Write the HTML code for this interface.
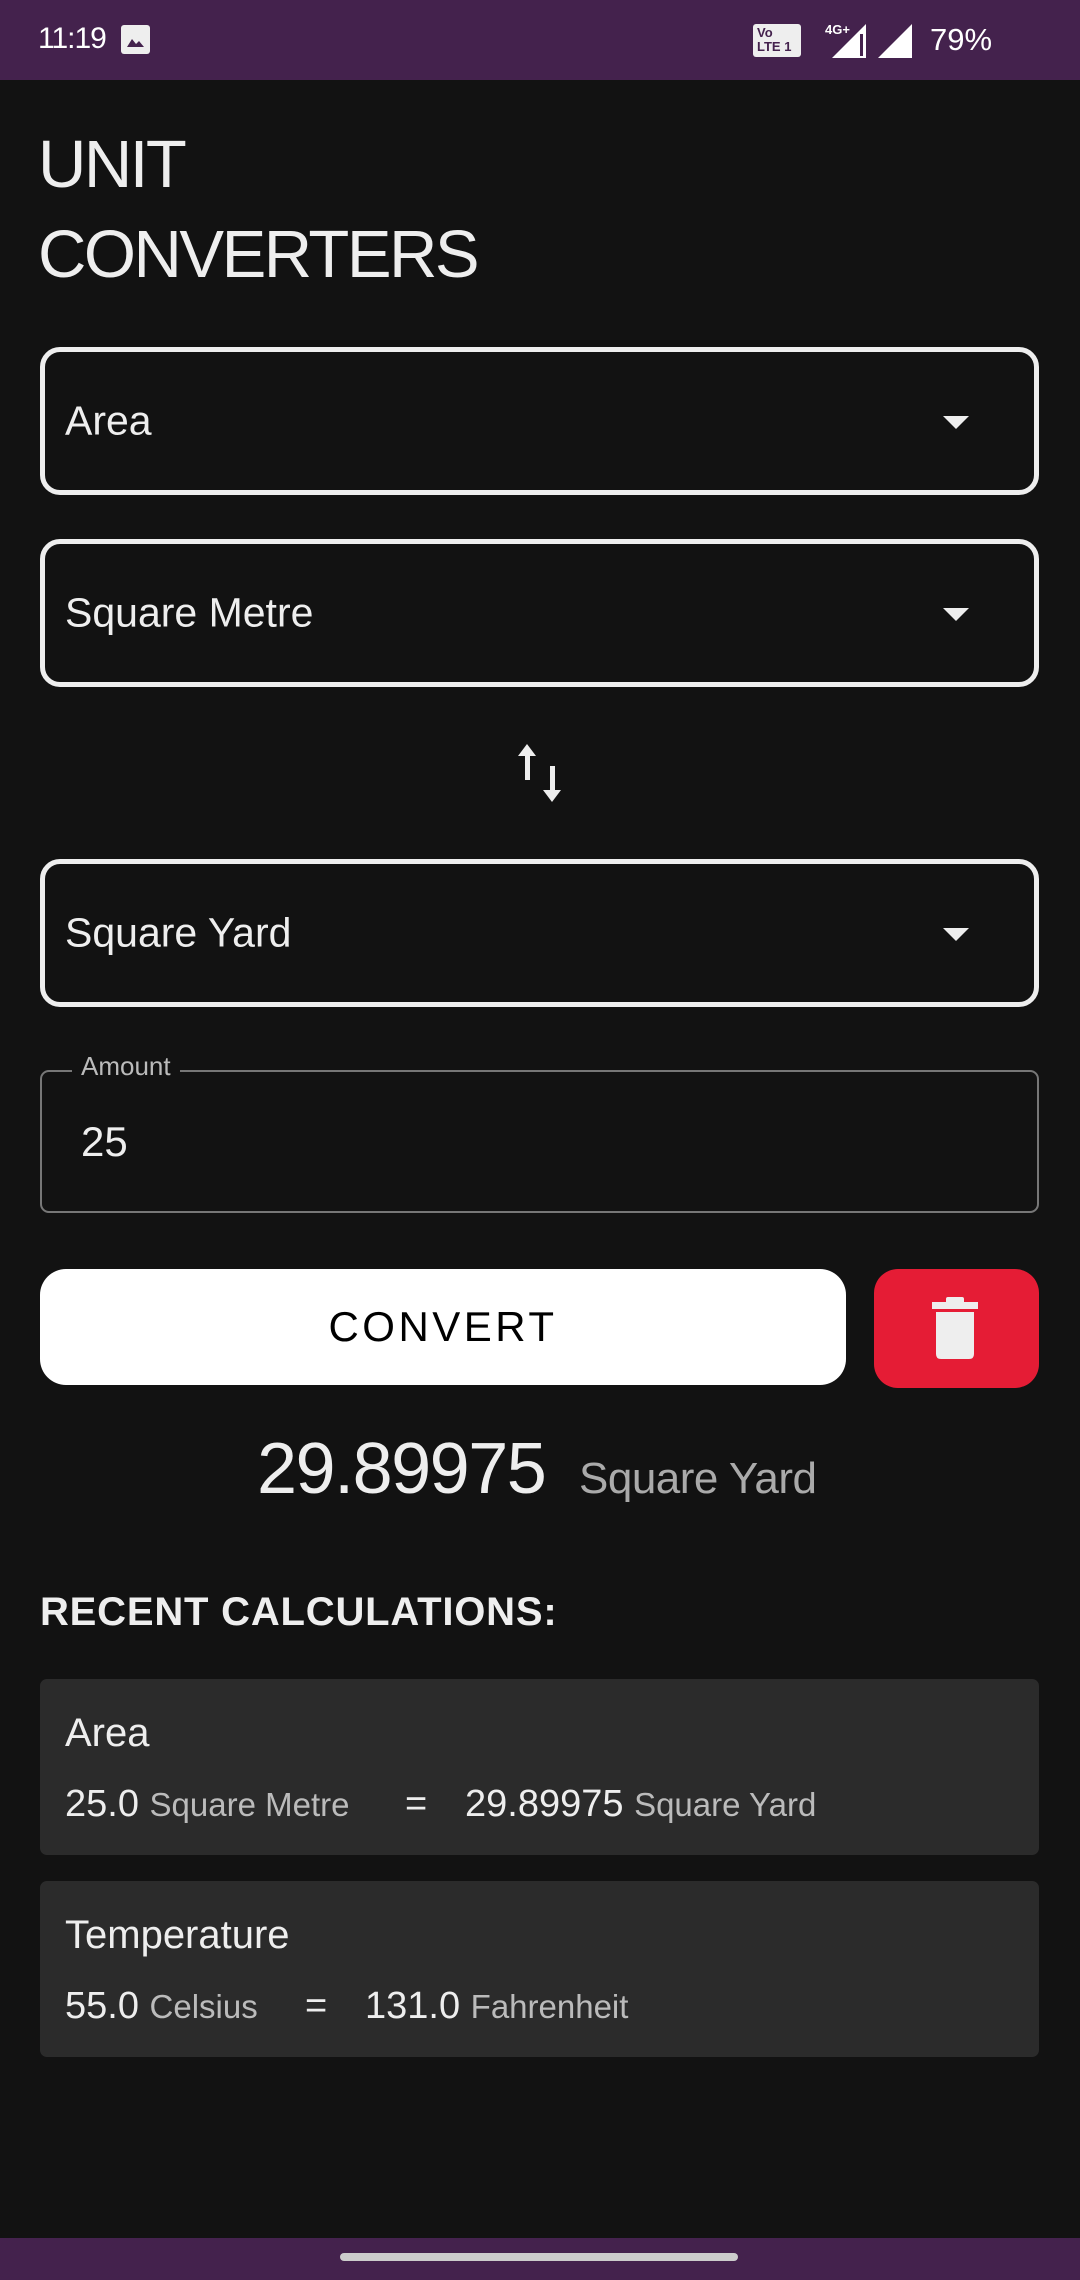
<!DOCTYPE html>
<html><head><meta charset="utf-8"><style>
*{margin:0;padding:0;box-sizing:border-box}
body{width:1080px;height:2280px;background:#121212;font-family:"Liberation Sans",sans-serif;color:#eee;position:relative;overflow:hidden}
.abs{position:absolute}
.sb{top:0;left:0;width:1080px;height:80px;background:#44224d}
.nb{bottom:0;left:0;width:1080px;height:42px;background:#44224d}
.dd{left:40px;width:999px;height:148px;border:5px solid #eee;border-radius:20px}
.dd span{position:absolute;left:20px;top:50%;transform:translateY(-50%);font-size:41px;color:#eee}
.dd i{position:absolute;left:898px;top:50%;margin-top:-5px;width:0;height:0;border-left:13px solid transparent;border-right:13px solid transparent;border-top:13px solid #eee}
.card{left:40px;width:999px;height:176px;background:#2b2b2b;border-radius:7px}
.card .t{position:absolute;left:25px;top:32px;font-size:40px;color:#eee}
.card .l{position:absolute;top:104px;font-size:38px;color:#eee;white-space:nowrap}
.card .l small{font-size:33px;color:#bbb}
</style></head><body>
<div class="abs sb"></div>
<div class="abs" style="left:38px;top:22px;font-size:30px;color:#fff;letter-spacing:-1px">11:19</div>
<div class="abs" style="left:121px;top:25px;width:29px;height:29px;background:#eee;border-radius:3px"><svg width="29" height="29"><path d="M6 22 L11 14 L15 19 L18 16 L23 22Z" fill="#44224d"/></svg></div>
<div class="abs" style="left:753px;top:24px;width:48px;height:33px;background:#eee;border-radius:3px;color:#44224d;font-size:13px;font-weight:bold;line-height:14px;padding:2px 4px">Vo<br>LTE 1</div>
<div class="abs" style="left:825px;top:22px;font-size:13px;font-weight:bold;color:#fff">4G+</div>
<svg class="abs" style="left:830px;top:22px" width="40" height="37"><path d="M36 2 V36 H2Z" fill="#fff"/><rect x="30" y="12" width="3" height="22" fill="#44224d"/></svg>
<svg class="abs" style="left:876px;top:22px" width="40" height="37"><path d="M36 2 V36 H2Z" fill="#fff"/></svg>
<div class="abs" style="left:930px;top:22px;font-size:31px;color:#fff">79%</div>

<div class="abs" style="left:38px;top:120px;font-size:67px;line-height:90px;letter-spacing:-2.5px;color:#eee">UNIT<br>CONVERTERS</div>

<div class="abs dd" style="top:347px"><span>Area</span><i></i></div>
<div class="abs dd" style="top:539px"><span>Square Metre</span><i></i></div>
<svg class="abs" style="left:516px;top:742px" width="50" height="62" viewBox="0 0 50 62"><path d="M11 2 L20 14 H14 V38 H9 V14 H2Z M36 60 L45 48 H39 V24 H34 V48 H27Z" fill="#eee"/></svg>
<div class="abs dd" style="top:859px"><span>Square Yard</span><i></i></div>

<div class="abs" style="left:40px;top:1070px;width:999px;height:143px;border:2.5px solid #777;border-radius:9px"></div>
<div class="abs" style="left:72px;top:1051px;padding:0 9px;background:#121212;font-size:26px;color:#bbb">Amount</div>
<div class="abs" style="left:81px;top:1118px;font-size:42px;color:#eee">25</div>

<div class="abs" style="left:40px;top:1269px;width:806px;height:116px;background:#fff;border-radius:26px;color:#000;font-size:42px;letter-spacing:3.5px;text-align:center;line-height:116px">CONVERT</div>
<div class="abs" style="left:874px;top:1269px;width:165px;height:119px;background:#e51c35;border-radius:24px"></div>
<svg class="abs" style="left:930px;top:1296px" width="50" height="64" viewBox="0 0 50 64"><rect x="2" y="6" width="46" height="7" fill="#eee"/><rect x="16" y="1" width="18" height="7" rx="2" fill="#eee"/><path d="M6 16 H44 V58 Q44 63 39 63 H11 Q6 63 6 58Z" fill="#eee"/></svg>

<div class="abs" style="left:257px;top:1428px;font-size:72px;color:#eee;letter-spacing:-1.5px">29.89975</div>
<div class="abs" style="left:579px;top:1454px;font-size:44px;color:#aaa;letter-spacing:-0.5px">Square Yard</div>

<div class="abs" style="left:40px;top:1590px;font-size:40px;font-weight:bold;color:#eee;letter-spacing:0.8px">RECENT CALCULATIONS:</div>

<div class="abs card" style="top:1679px"><div class="t">Area</div>
<div class="l" style="left:25px">25.0 <small>Square Metre</small></div>
<div class="l" style="left:365px">=</div>
<div class="l" style="left:425px">29.89975 <small>Square Yard</small></div></div>

<div class="abs card" style="top:1881px"><div class="t">Temperature</div>
<div class="l" style="left:25px">55.0 <small>Celsius</small></div>
<div class="l" style="left:265px">=</div>
<div class="l" style="left:325px">131.0 <small>Fahrenheit</small></div></div>

<div class="abs nb"></div>
<div class="abs" style="left:340px;top:2253px;width:398px;height:8px;border-radius:4px;background:#ccc"></div>
</body></html>
